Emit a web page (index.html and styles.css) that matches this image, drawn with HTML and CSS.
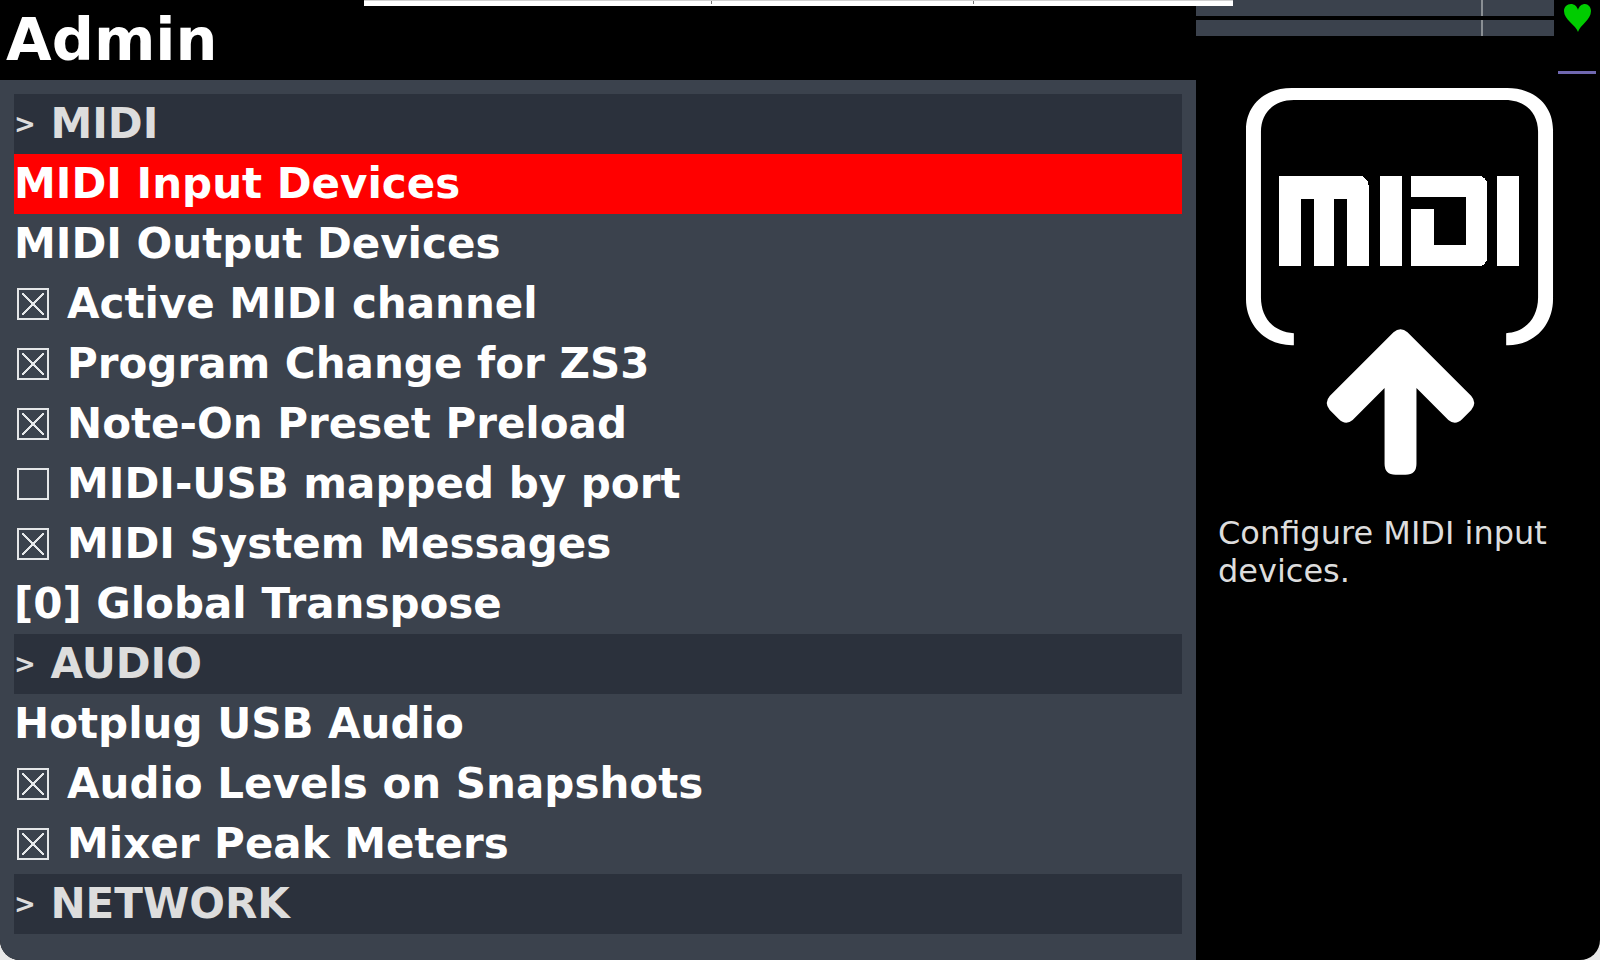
FILE: index.html
```html
<!DOCTYPE html>
<html lang="en">
<head>
    <meta charset="UTF-8">
    <title>Admin</title>
    <link rel="stylesheet" href="styles.css">
</head>
<body>
<div class="screen">
    <div class="toolbar"><span></span><span></span><span></span></div>
    <main class="main">
        <h1 class="title">Admin</h1>
        <div class="menu">
            <h2 class="row section"><span class="arrow">&gt;</span> MIDI</h2>
            <button class="row selected">MIDI Input Devices</button>
            <button class="row">MIDI Output Devices</button>
            <label class="row"><input type="checkbox" class="check" checked>Active MIDI channel</label>
            <label class="row"><input type="checkbox" class="check" checked>Program Change for ZS3</label>
            <label class="row"><input type="checkbox" class="check" checked>Note-On Preset Preload</label>
            <label class="row"><input type="checkbox" class="check">MIDI-USB mapped by port</label>
            <label class="row"><input type="checkbox" class="check" checked>MIDI System Messages</label>
            <button class="row">[0] Global Transpose</button>
            <h2 class="row section"><span class="arrow">&gt;</span> AUDIO</h2>
            <button class="row">Hotplug USB Audio</button>
            <label class="row"><input type="checkbox" class="check" checked>Audio Levels on Snapshots</label>
            <label class="row"><input type="checkbox" class="check" checked>Mixer Peak Meters</label>
            <h2 class="row section"><span class="arrow">&gt;</span> NETWORK</h2>
        </div>
    </main>
    <aside class="side">
        <div class="status">
            <div class="meters">
                <div class="meter"></div>
                <div class="meter"></div>
            </div>
            <div class="health">
                <svg class="heart" viewBox="0 0 28 28">
                    <path fill="#00cc00" d="M15 28C13 21 1 16 1 7C1 3 4 0 8 0C11 0 14 2 15 6C16 2 19 0 22 0C25 0 28 3 28 7C28 16 17 21 15 28Z"/>
                </svg>
                <div class="load"></div>
            </div>
        </div>
        <svg class="icon" viewBox="0 0 308 388" fill="#fff">
            <path d="M48 258V246C28 245 15 231 15 210V44C15 25 28 12 48 12H260C280 12 293 25 293 44V210C293 231 280 245 261 246V258C289 259 308 238 308 212V42C308 17 289 0 262 0H46C19 0 0 17 0 42V212C0 238 20 259 48 258Z"/>
            <!-- midi mark -->
            <g shape-rendering="crispEdges">
                <rect x="33" y="88" width="80" height="23"/>
                <rect x="33" y="88" width="22" height="91"/>
                <rect x="68" y="88" width="20" height="91"/>
                <rect x="90" y="88" width="33" height="23" rx="10"/>
                <rect x="101" y="98" width="22" height="81"/>
                <rect x="134" y="88" width="22" height="91"/>
                <rect x="200" y="88" width="42" height="91" rx="9"/>
                <rect x="166" y="88" width="67" height="21"/>
                <rect x="166" y="156" width="67" height="23"/>
                <rect x="188" y="109" width="33" height="48" fill="#000"/>
                <rect x="166" y="121" width="23" height="58"/>
                <rect x="188" y="157" width="44" height="22"/>
                <rect x="252" y="88" width="22" height="91"/>
            </g>
            <!-- arrow -->
            <path d="M148 245Q155 239 162 245L226 309Q232 316 226 323L217 332Q210 339 203 333L171 301V377Q171 388 160 388H150Q139 388 139 377V301L107 333Q100 339 93 332L84 323Q78 316 84 309Z"/>
        </svg>
        <p class="info">Configure MIDI input devices.</p>
    </aside>
</div>
</body>
</html>
```
FILE: styles.css
```css
*{
    box-sizing: border-box;
    margin: 0;
    padding: 0;
}
body{
    background-color: #e8e8e8;
    font-family: "DejaVu Sans", sans-serif;
    color: white;
}
.screen{
    position: relative;
    display: grid;
    grid-template-columns: 1196fr 404fr;
    min-height: 100vh;
    background-color: black;
    border-radius: 0 0 20px 20px;
    overflow: hidden;
}
/* edge of the floating toolbar, over the top of the screen */
.toolbar{
    position: absolute;
    top: 0;
    left: 364px;
    right: 367px;
    height: 6px;
    display: grid;
    grid-template-columns: 347fr 262fr 260fr;
    background-color: white;
    border-top: 1px solid #d0d0d0;
}
.toolbar span + span{
    height: 3px;
    border-left: 1px solid #777;
}
.main{
    display: flex;
    flex-direction: column;
}
.title{
    height: 80px;
    padding-left: 6px;
    font-size: 59px;
    line-height: 80px;
}
.menu{
    flex: 1;
    padding: 14px;
    background-color: #3b424d;
}
.row{
    display: flex;
    align-items: center;
    width: 100%;
    height: 60px;
    padding-bottom: 1px;
    border: none;
    background: none;
    color: white;
    font-family: inherit;
    font-size: 42px;
    font-weight: bold;
    text-align: left;
    white-space: pre;
}
.section{
    background-color: #2b313c;
    color: #dddddd;
}
.arrow{
    font-size: 26px;
}
.selected{
    background-color: red;
}
.check{
    appearance: none;
    flex: none;
    width: 32px;
    height: 32px;
    margin: 0 18px 0 3px;
    border: 2px solid #e4e6e8;
}
.check:checked{
    background:
        linear-gradient(45deg, transparent 46%, #e4e6e8 47%, #e4e6e8 53%, transparent 54%) center / 22px 22px no-repeat,
        linear-gradient(-45deg, transparent 46%, #e4e6e8 47%, #e4e6e8 53%, transparent 54%) center / 22px 22px no-repeat;
}
.side{
    display: flex;
    flex-direction: column;
}
.status{
    display: flex;
    height: 88px;
}
.meters{
    flex: 1;
    display: flex;
    flex-direction: column;
    gap: 4px;
}
.meter{
    height: 16px;
    background: linear-gradient(#8a8f94, #8a8f94) 80% 0 / 2px 100% no-repeat #3b424d;
}
.health{
    display: flex;
    flex-direction: column;
    justify-content: space-between;
    align-items: center;
    width: 46px;
    padding: 4px 4px 14px;
}
.heart{
    width: 28px;
    height: 28px;
}
.load{
    width: 38px;
    height: 3px;
    background-color: #7068b0;
}
.icon{
    align-self: center;
    width: 76%;
    margin-left: 4px;
}
.info{
    padding: 39px 22px;
    color: #dddddd;
    font-size: 32px;
    line-height: 38px;
}
```
